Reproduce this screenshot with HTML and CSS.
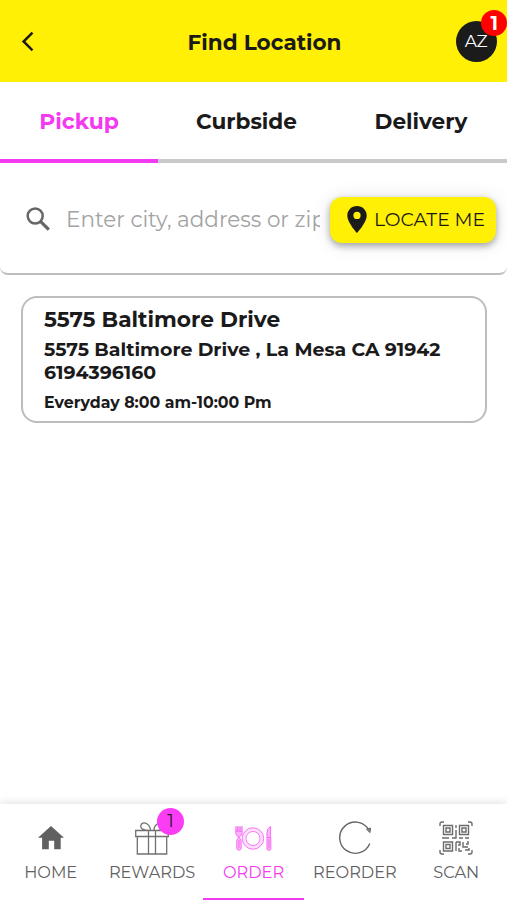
FILE: index.html
```html
<!DOCTYPE html>
<html lang="en">
<head>
<meta charset="utf-8">
<meta name="viewport" content="width=device-width, initial-scale=1">
<title>Find Location</title>
<link rel="stylesheet" href="styles.css">
</head>
<body>
<header class="header">
  <button class="back" aria-label="Back"><svg width="14" height="20" viewBox="0 0 14 20"><path d="M11.500 1.700 2.600 10.500l8.900 8.800" fill="none" stroke="#1c1b1c" stroke-width="2.500"/></svg></button>
  <h1 class="title"><span>Find Location</span></h1>
  <div class="avatar"><span>AZ</span><b class="alert">1</b></div>
</header>
<nav class="tabs">
  <a class="tab active"><span>Pickup</span></a>
  <a class="tab"><span>Curbside</span></a>
  <a class="tab"><span>Delivery</span></a>
</nav>
<main class="main">
  <section class="search">
    <svg class="glass" width="24" height="24" viewBox="0 0 24 24"><circle cx="9.200" cy="9" r="7.500" fill="none" stroke="#666" stroke-width="2.500"/><path d="m14.500 14.300 8.300 8.300" stroke="#666" stroke-width="3.200"/></svg>
    <div class="field"><span>Enter city, address or zip</span></div>
    <button class="locate">
      <svg width="20" height="27" viewBox="0 0 20 27"><path fill="#1c1b1c" fill-rule="evenodd" d="M10 0C4.500 0 .3 4.200.3 9.500.3 16.500 10 27 10 27s9.700-10.500 9.700-17.500C19.700 4.200 15.500 0 10 0Zm0 5.800a3.600 3.600 0 1 1 0 7.200 3.600 3.600 0 0 1 0-7.200Z"/></svg>
      <span>LOCATE ME</span>
    </button>
  </section>
  <article class="card">
    <h2 class="name">5575 Baltimore Drive</h2>
    <p class="address">5575 Baltimore Drive , La Mesa CA 91942</p>
    <p class="phone">6194396160</p>
    <p class="hours">Everyday 8:00 am-10:00 Pm</p>
  </article>
</main>
<nav class="bottom">
  <a class="item">
    <svg width="34" height="34" viewBox="0 0 34 34"><path fill="#606060" d="M17 5 30 16.800h-3.300v11.500h-6.500v-8.500h-5.400v8.500H8.100V16.800H4Z"/></svg>
    <span>HOME</span>
  </a>
  <a class="item">
    <span class="gift"><svg width="34" height="34" viewBox="0 0 34 34" fill="none" stroke="#707070" stroke-width="1.300"><path d="M.7 9.500h32.600v6H.7zM2.300 15.500h29.400V33H2.300zM13.500 9.500h7V33h-7zM14.500 9.500C9 9.500 5.500 8 5.700 5c.2-3 3.400-4 5.800-2.500C14 4 15.500 7 15.500 9.500M19 9.500C19 6 21 3.300 23.500 2.300 26 1.500 28.500 3 28.200 5.500 28 8 25 9.500 19.500 9.500"/></svg><b class="count">1</b></span>
    <span>REWARDS</span>
  </a>
  <a class="item current">
    <svg width="38" height="34" viewBox="-.5 0 39 34" fill="#fbb5fa" stroke="#f655f3" stroke-width=".8"><circle cx="19" cy="17.500" r="9.200" fill="none" stroke="#fde0fd" stroke-width="3.600"/><circle cx="19" cy="17.500" r="11" fill="none"/><circle cx="19" cy="17.500" r="7.200" fill="none"/><path d="M1.300 5v7.500q0 2.200 2.500 2.500v2.500Q2.300 18 2.300 20v7.500q0 2 2.300 2t2.300-2V20q0-2-1.500-2.500V15q2.500-.3 2.500-2.500V5M3.400 5v5M5.700 5v5M1.300 10h6.600M4.600 19v8M33.300 16.500h4V28q0 1.700-2 1.700t-2-1.700V11.500q0-4 3.700-6.500v11.500M35.300 18v9.500"/></svg>
    <span>ORDER</span>
  </a>
  <a class="item">
    <svg width="34" height="34" viewBox="0 0 34 34"><path d="M31.800 22.500A15.600 15.600 0 1 1 31.200 9.600" fill="none" stroke="#666" stroke-width="1.400"/><path d="m28.500 8.200 4-1.200-.5 4.600Z" fill="#888" stroke="#666"/></svg>
    <span>REORDER</span>
  </a>
  <a class="item">
    <svg width="34" height="34" viewBox="0 0 34 34" fill="none" stroke="#6b6b6b" stroke-width="1.400"><path d="M1 5V3q0-2 2-2h2M29 1h2q2 0 2 2v2M1 29v2q0 2 2 2h2M29 33h2q2 0 2-2v-2"/><path d="M4.500 4.500h9v9h-9zM20.500 4.500h9v9h-9zM4.500 21h9v9h-9zM7 7h4v4H7zM23 7h4v4h-4zM7 23.500h4v4H7z"/><path d="M17 4v3M17 9v8h-4M3 17h7M20 17h4M26 17h4M17 21v9M17 21h4v3h-2M20 27v3h3M24 21v5h5M29 20v3h-2M26 29h4v-2"/></svg>
    <span>SCAN</span>
  </a>
</nav>
</body>
</html>
```
FILE: styles.css
```css
* { box-sizing: border-box; }
body { margin: 0; height: 900px; display: flex; flex-direction: column; overflow: hidden; background: #fff; color: #1b1a1b; font-family: Montserrat, Inter, "Open Sans", sans-serif; }
h1, h2, p { margin: 0; }
svg { display: block; flex: none; }
button { border: 0; padding: 0; background: none; font: inherit; color: inherit; }
span { white-space: nowrap; }

.header { height: 82px; flex: none; display: grid; grid-template-columns: 60px 1fr 60px; align-items: center; background: #fff005; }
.back { width: 14px; margin-left: 21px; }
.title { text-align: center; font-size: 21.500px; font-weight: 700; line-height: 28px; padding: 1px 22px 0; margin-right: -22px; }
.avatar { position: relative; width: 41px; height: 41px; margin-left: 8.500px; border-radius: 50%; background: #1c1b1c; color: #fff; display: flex; align-items: center; justify-content: center; font-size: 17px; letter-spacing: -.4px; }
.alert { position: absolute; left: 25.500px; top: -11px; width: 26px; height: 26px; border-radius: 50%; background: #f00; font-size: 19px; line-height: 27px; text-align: center; }

.tabs { height: 81px; flex: none; display: grid; grid-template-columns: 158px 177px 172px; }
.tab { display: flex; align-items: center; justify-content: center; border-bottom: 4px solid #c9c9c9; font-size: 21.600px; font-weight: 700; }
.tab.active { color: #f43af0; border-color: #f43af0; font-size: 21.900px; }

.main { flex: 1; }
.search { height: 112px; display: flex; align-items: center; padding: 3px 11px 0 26px; border-bottom: 2px solid #bdbdbd; border-radius: 0 0 8px 8px; }
.glass { margin-bottom: 2px; }
.field { width: 254px; margin: 0 0 2px 16px; overflow: hidden; font-size: 21.500px; line-height: 30px; color: #a3a3a3; }
.locate { width: 166px; height: 46px; margin-left: 10px; display: flex; align-items: center; padding-left: 17px; gap: 7px; border-radius: 12px; background: #fff005; box-shadow: 0 3px 7px rgba(0,0,0,.33), 0 1px 20px rgba(0,0,0,.1); font-size: 18.800px; }

.card { width: 466px; height: 127px; margin: 21px 0 0 21px; padding: 6px 21px; border: 2px solid #bdbdbd; border-radius: 16px; font-weight: 700; white-space: nowrap; }
.name { font-size: 21.700px; line-height: 30px; }
.address { font-size: 18.950px; line-height: 23px; margin-top: 4px; }
.phone { font-size: 18.950px; line-height: 23px; }
.hours { font-size: 15.800px; line-height: 20px; margin-top: 9px; }

.bottom { height: 96px; flex: none; display: grid; grid-template-columns: repeat(5, 1fr); box-shadow: 0 -1px 9px rgba(0,0,0,.13); }
.item { display: flex; flex-direction: column; align-items: center; padding-top: 17px; gap: 6px; font-size: 16.200px; line-height: 22px; color: #606060; border-bottom: 2px solid transparent; }
.current { color: #f43af0; border-color: #f43af0; }
.gift { position: relative; }
.count { position: absolute; left: 22px; top: -13px; width: 27px; height: 27px; border-radius: 50%; background: #fb3cf5; color: #222; font-size: 18px; font-weight: 400; line-height: 27px; text-align: center; }
```
